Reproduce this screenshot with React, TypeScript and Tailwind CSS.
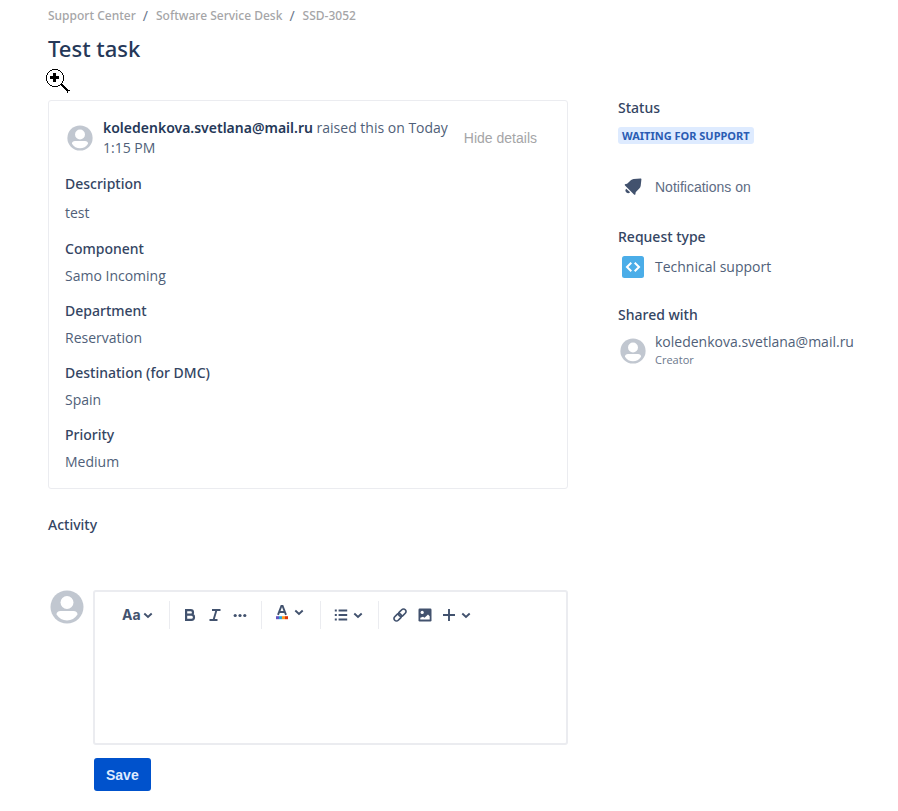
import type { ReactNode } from 'react'

interface Field {
  label: string
  value: string
}

const FIELDS: Field[] = [
  { label: 'Component', value: 'Samo Incoming' },
  { label: 'Department', value: 'Reservation' },
  { label: 'Destination (for DMC)', value: 'Spain' },
  { label: 'Priority', value: 'Medium' },
]

const CRUMBS = ['Support Center', 'Software Service Desk', 'SSD-3052']

export default function App() {
  return (
    <div className="min-h-screen bg-white pt-[6px] pr-[30px] pb-5 pl-12 font-['Open_Sans','Noto_Sans',sans-serif] text-[14px] leading-5 text-[#505f79]">
      <nav aria-label="Breadcrumb" className="flex h-5 items-center gap-[7px] font-['Noto_Sans',sans-serif] text-[12px] font-medium text-[#a5a5a7]">
        {CRUMBS.map((crumb, i) => (
          <span key={crumb} className="flex items-center gap-2">
            {i > 0 ? <span className="text-[14px] font-normal text-[#6b778c]">/</span> : null}
            <a href="#">{crumb}</a>
          </span>
        ))}
      </nav>

      <header className="relative mt-[6px]">
        <h1 className="font-['Noto_Sans',sans-serif] text-[22px] leading-8 font-medium text-[#253858]">Test task</h1>
        <ZoomCursor />
      </header>

      <div className="mt-9 grid grid-cols-[minmax(0,1fr)_250px] gap-[50px]">
        <main>
          <section className="rounded-[3px] border border-[#ebecf0] px-4 pt-[17px] pb-4">
            <div className="flex items-center">
              <div className="px-[2px]">
                <Avatar className="size-[26px]" />
              </div>
              <p className="ml-2 flex-1">
                <strong className="font-['Noto_Sans',sans-serif] font-semibold text-[#253858]">koledenkova.svetlana@mail.ru</strong>
                <span> raised this on Today</span>
                <time className="block">1:15 PM</time>
              </p>
              <button type="button" className="mr-[14px] ml-2 font-['Liberation_Sans',sans-serif] text-[#a5a5a7]">
                Hide details
              </button>
            </div>
            <dl className="mt-4">
              <Term>Description</Term>
              <dd className="mt-[9px] mb-4">test</dd>
              {FIELDS.map((field) => (
                <div key={field.label} className="mb-[15px] last:mb-0">
                  <Term>{field.label}</Term>
                  <dd className="mt-[7px]">{field.value}</dd>
                </div>
              ))}
            </dl>
          </section>

          <Heading className="mt-[26px]">Activity</Heading>

          <form className="mt-[55px] flex items-start" onSubmit={(e) => e.preventDefault()}>
            <div className="pl-[2px]">
              <Avatar className="size-[34px]" />
            </div>
            <div className="ml-[9px] flex-1">
              <div className="rounded-[3px] border-2 border-[#ebecf0]">
                <Toolbar />
                <textarea aria-label="Comment" className="block h-[105px] w-full resize-none px-5 py-2 outline-none" />
              </div>
              <button
                type="submit"
                className="mt-[13px] ml-px h-[33px] rounded-[3px] bg-[#0052cc] px-3 font-['Liberation_Sans',sans-serif] text-[14px] font-bold text-[#deebff]"
              >
                Save
              </button>
            </div>
          </form>
        </main>

        <aside>
          <Heading className="-mt-[2px]">Status</Heading>
          <span className="mt-[9px] block w-fit rounded-[3px] bg-[#deebff] px-1 font-['Noto_Sans',sans-serif] text-[11px] leading-[17px] font-bold text-[#2a5cb3]">
            WAITING FOR SUPPORT
          </span>

          <button type="button" className="mt-[33px] flex h-5 items-center font-['Liberation_Sans',sans-serif] text-[#5e6c84]">
            <span className="flex w-[37px] pl-1">
              <BellIcon />
            </span>
            Notifications on
          </button>

          <Heading className="mt-[30px]">Request type</Heading>
          <div className="mt-[9px] flex h-[22px] items-center">
            <span className="flex w-[37px] pl-1">
              <CodeIcon />
            </span>
            Technical support
          </div>

          <Heading className="mt-[27px]">Shared with</Heading>
          <div className="mt-2 flex items-center">
            <span className="flex w-[37px] pl-[2px]">
              <Avatar className="size-[26px]" />
            </span>
            <div>
              <p className="leading-[18px]">koledenkova.svetlana@mail.ru</p>
              <p className="text-[11px] leading-[18px] text-[#6b778c]">Creator</p>
            </div>
          </div>
        </aside>
      </div>
    </div>
  )
}

function Heading({ className, children }: { className: string; children: ReactNode }) {
  return <h2 className={`font-['Noto_Sans',sans-serif] font-medium text-[#344563] ${className}`}>{children}</h2>
}

function Term({ children }: { children: ReactNode }) {
  return <dt className="font-['Noto_Sans',sans-serif] font-medium text-[#344563]">{children}</dt>
}

function Toolbar() {
  return (
    <div className="flex h-[46px] items-center pl-[27px] text-[#42526e]">
      <ToolButton label="Text styles" className="gap-[2px]">
        <span className="font-['Inter',sans-serif] text-[14px] font-bold">Aa</span>
        <Chevron />
      </ToolButton>
      <Divider className="mr-[13px] ml-4" />
      <ToolButton label="Bold">
        <svg viewBox="0 0 14 14" className="size-[14px]" fill="none" stroke="currentColor" strokeWidth="2.2">
          <path d="M3.1 2.1h4.6a2.2 2.2 0 0 1 0 4.6H3.1zM3.1 6.7h5.3a2.6 2.6 0 0 1 0 5.2H3.1z" />
        </svg>
      </ToolButton>
      <ToolButton label="Italic" className="ml-[11px]">
        <svg viewBox="0 0 14 14" className="size-[14px]" fill="none" stroke="currentColor" strokeWidth="1.9">
          <path d="M4 2h8.5M1.5 12h8M8.5 2l-3 10" />
        </svg>
      </ToolButton>
      <ToolButton label="More formatting" className="ml-[11px]">
        <svg viewBox="0 0 14 14" className="size-[14px]" fill="currentColor">
          <circle cx="2.2" cy="7.5" r="1.6" />
          <circle cx="7" cy="7.5" r="1.6" />
          <circle cx="11.8" cy="7.5" r="1.6" />
        </svg>
      </ToolButton>
      <Divider className="mr-[13px] ml-[14px]" />
      <ToolButton label="Text color" className="gap-[5px] pb-[6px]">
        <svg viewBox="0 0 14 16" className="h-4 w-[14px]">
          <path d="M3 10.8 6.4 2h1.2l3.4 8.8M4.2 8h5.6" fill="none" stroke="currentColor" strokeWidth="1.9" />
          <rect x="1" y="12.2" width="3" height="3" fill="#6554c0" />
          <rect x="4" y="12.2" width="3" height="3" fill="#2aa3d8" />
          <rect x="7" y="12.2" width="3" height="3" fill="#ff991f" />
          <rect x="10" y="12.2" width="3" height="3" fill="#de350b" />
        </svg>
        <Chevron />
      </ToolButton>
      <Divider className="mr-[13px] ml-4" />
      <ToolButton label="Lists" className="gap-[5px]">
        <svg viewBox="0 0 14 14" className="size-[14px]" fill="none" stroke="currentColor" strokeWidth="1.8">
          <path d="M.8 2.5h2M.8 7h2M.8 11.500h2M4.600 2.500h8.600M4.600 7h8.600M4.600 11.500h8.600" />
        </svg>
        <Chevron />
      </ToolButton>
      <Divider className="mr-[13px] ml-[15px]" />
      <ToolButton label="Link">
        <svg viewBox="0 0 16 16" className="size-4" fill="none" stroke="currentColor" strokeWidth="1.7">
          <rect x="-4.2" y="-2.5" width="8.4" height="5" rx="2.5" transform="translate(10.3 5.7) rotate(-45)" />
          <rect x="-4.2" y="-2.5" width="8.4" height="5" rx="2.5" transform="translate(5.7 10.3) rotate(-45)" />
        </svg>
      </ToolButton>
      <ToolButton label="Image" className="ml-[10px]">
        <svg viewBox="0 0 14 14" className="size-[14px]">
          <rect x=".5" y=".5" width="13" height="13" rx="1.2" fill="currentColor" />
          <circle cx="4.2" cy="4.4" r="1.6" fill="#fff" />
          <path d="M2.3 11.5V9.8L5 8.8l1.5 1L10 6.4l1.7 1.8v3.3z" fill="#fff" />
        </svg>
      </ToolButton>
      <ToolButton label="Insert" className="ml-[10px] gap-[5px]">
        <svg viewBox="0 0 14 14" className="size-[14px]" fill="none" stroke="currentColor" strokeWidth="1.9">
          <path d="M7 1v12M1 7h12" />
        </svg>
        <Chevron />
      </ToolButton>
    </div>
  )
}

function ToolButton({ label, className = '', children }: { label: string; className?: string; children: ReactNode }) {
  return (
    <button type="button" aria-label={label} className={`flex items-center ${className}`}>
      {children}
    </button>
  )
}

function Divider({ className }: { className: string }) {
  return <span className={`h-7 w-px bg-[#ebecf0] ${className}`} />
}

function Chevron() {
  return (
    <svg viewBox="0 0 10 10" className="size-[10px]" fill="none" stroke="currentColor" strokeWidth="1.9">
      <path d="M1.3 3.500 5 7l3.700-3.500" />
    </svg>
  )
}

function Avatar({ className }: { className: string }) {
  return (
    <svg viewBox="0 0 34 34" className={className}>
      <circle cx="17" cy="17" r="16.5" fill="#c1c7d0" />
      <circle cx="17" cy="12.5" r="6.5" fill="#fff" />
      <path d="M6.5 24.500c0-2.300 1.500-3.500 4-3.500h13c2.500 0 4 1.200 4 3.500-2.400 3.800-6.200 6-10.500 6s-8.100-2.200-10.500-6z" fill="#fff" />
    </svg>
  )
}

function BellIcon() {
  return (
    <svg viewBox="0 0 20 20" className="size-5" fill="#42526e">
      <path d="M18.6 1.6c.5 0 .9.4.8.9l-.7 6.3c-.1 1.1-.6 2-1.4 2.8l-3.2 3.2c-.6.6-.7 1.200-.6 2 .1.9-.9 1.400-1.500.8L3 8.600c-.6-.6-.2-1.600.7-1.600.9.1 1.400-.1 2-.7l3.100-3c.8-.8 1.700-1.300 2.800-1.400z" />
      <path d="M4.200 11.800a2.300 2.300 0 1 0 3.900 3.500z" />
    </svg>
  )
}

function CodeIcon() {
  return (
    <svg viewBox="0 0 22 22" className="size-[22px]">
      <rect width="22" height="22" rx="2.5" fill="#4bade8" />
      <path d="M9.300 6.800 5 11l4.300 4.200M12.700 6.800 17 11l-4.300 4.200" fill="none" stroke="#fff" strokeWidth="2" />
    </svg>
  )
}

// pointer left over the page, drawn on a whole-pixel grid
function ZoomCursor() {
  return (
    <svg viewBox="0 0 24 25" className="absolute top-[37px] -left-[2px] h-[25px] w-6" shapeRendering="crispEdges" aria-hidden="true">
      <path d="M6 0h6v1H6zM4 1h2v1H4zM12 1h2v1h-2zM3 2h1v1H3zM14 2h1v1h-1zM2 3h1v1H2zM15 3h1v1h-1zM1 4h1v2H1zM16 4h1v2h-1zM0 6h1v6H0zM17 6h1v6h-1z" />
      <path d="M1 12h1v2H1zM16 12h1v2h-1zM2 14h1v1H2zM15 14h1v1h-1zM3 15h1v1H3zM14 15h1v1h-1zM4 16h2v1H4zM12 16h2v1h-2zM6 17h6v1H6z" />
      <path d="M7 4h3v3h3v3h-3v3H7v-3H4V7h3z" />
      <path d="M15 15h2v1h1v1h1v1h1v1h1v1h1v1h2v1h-2v2h-1v-2h-1v-1h-1v-1h-1v-1h-1v-1h-1v-1h-1z" />
    </svg>
  )
}
